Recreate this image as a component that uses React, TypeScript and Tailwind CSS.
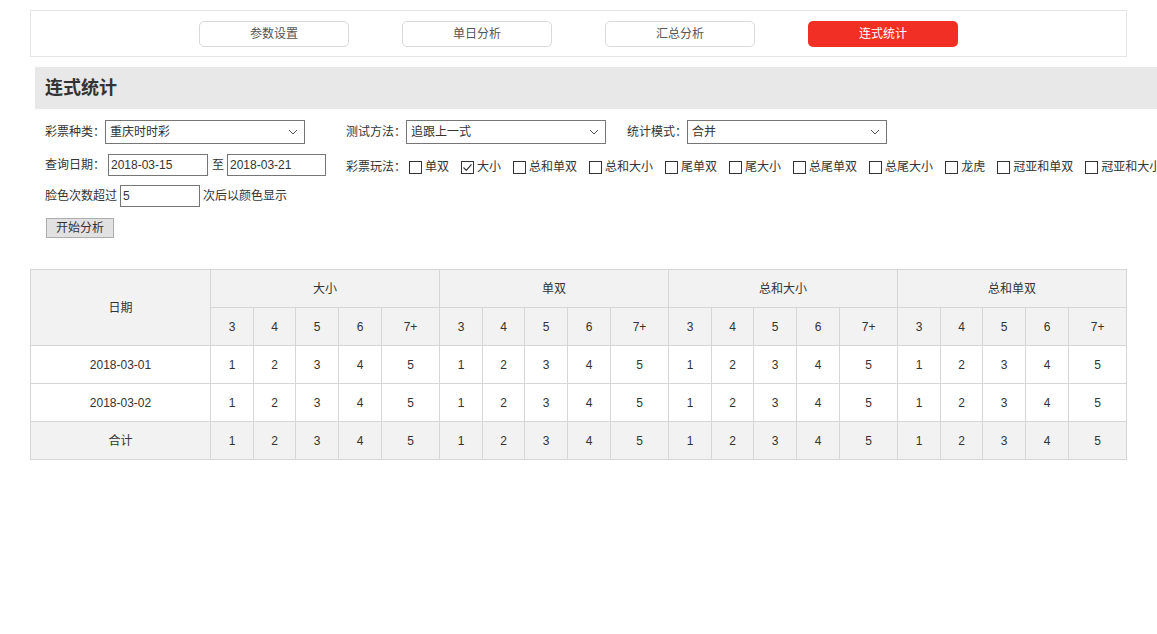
import React from 'react';

const tabs = ['参数设置', '单日分析', '汇总分析', '连式统计'];
const plays = ['单双', '大小', '总和单双', '总和大小', '尾单双', '尾大小', '总尾单双', '总尾大小', '龙虎', '冠亚和单双', '冠亚和大小'];
const groups = ['大小', '单双', '总和大小', '总和单双'];
const subs = ['3', '4', '5', '6', '7+'];
const widths = [43, 42, 43, 43, 58];
const rows = [
  { date: '2018-03-01', total: false },
  { date: '2018-03-02', total: false },
  { date: '合计', total: true },
];

function Chevron() {
  return (
    <svg width="10" height="6" viewBox="0 0 10 6" className="shrink-0">
      <path d="M1 1 L5 5 L9 1" fill="none" stroke="#555" strokeWidth="1" />
    </svg>
  );
}

function Select({ value, width }: { value: string; width: number }) {
  return (
    <div
      className="h-[24px] border border-[#767676] flex items-center justify-between pl-[4px] pr-[6px] bg-white"
      style={{ width }}
    >
      <span>{value}</span>
      <Chevron />
    </div>
  );
}

function Input({ value, width }: { value: string; width: number }) {
  return (
    <div className="h-[22px] border border-[#767676] flex items-center px-[2px] bg-white" style={{ width }}>
      {value}
    </div>
  );
}

function Check({ label, checked }: { label: string; checked?: boolean }) {
  return (
    <div className="flex items-center shrink-0 mr-[9px]">
      <span className="w-[13px] h-[13px] border border-[#333] ml-[3px] mr-[3px] flex items-center justify-center bg-white">
        {checked && (
          <svg width="11" height="11" viewBox="0 0 11 11">
            <path d="M1.5 5.5 L4.3 8.3 L9.5 2.3" fill="none" stroke="#333" strokeWidth="1.2" />
          </svg>
        )}
      </span>
      <span className="whitespace-nowrap">{label}</span>
    </div>
  );
}

export default function App() {
  const cell = 'border border-[#d6d6d6] text-center h-[38px] p-0 font-normal';
  return (
    <div
      className="w-[1157px] h-[634px] overflow-hidden bg-white text-[12px] text-[#333]"
      style={{ fontFamily: '"Liberation Sans", "Noto Sans CJK SC", sans-serif' }}
    >
      <div className="mt-[10px] ml-[30px] w-[1097px] h-[47px] border border-[#e5e5e5] flex items-center justify-center gap-[53px]">
        {tabs.map((t, i) =>
          i === 3 ? (
            <div key={t} className="w-[150px] h-[26px] rounded-[5px] bg-[#f22f25] text-white flex items-center justify-center">
              {t}
            </div>
          ) : (
            <div key={t} className="w-[150px] h-[26px] rounded-[5px] border border-[#d9d9d9] text-[#555] flex items-center justify-center">
              {t}
            </div>
          )
        )}
      </div>

      <div className="mt-[10px] ml-[35px] w-[1122px] h-[42px] bg-[#e8e8e8] flex items-center pl-[10px]">
        <span className="text-[18px] font-bold text-[#333]">连式统计</span>
      </div>

      <div className="flex pl-[45px] mt-[11px] whitespace-nowrap">
        <div className="w-[281px] shrink-0">
          <div className="flex items-center h-[24px]">
            <span className="w-[60px]">彩票种类：</span>
            <Select value="重庆时时彩" width={200} />
          </div>
          <div className="flex items-center h-[22px] mt-[10px]">
            <span className="w-[60px]">查询日期：</span>
            <span className="ml-[3px]"><Input value="2018-03-15" width={100} /></span>
            <span className="ml-[4px] mr-[3px]">至</span>
            <Input value="2018-03-21" width={100} />
          </div>
          <div className="flex items-center h-[22px] mt-[9px]">
            <span>脸色次数超过</span>
            <span className="ml-[3px] mr-[3px]"><Input value="5" width={80} /></span>
            <span>次后以颜色显示</span>
          </div>
          <button className="mt-[11px] ml-[1px] w-[68px] h-[20px] bg-[#e1e1e1] border border-[#adadad] text-[12px] text-[#333] flex items-center justify-center">
            开始分析
          </button>
        </div>

        <div className="ml-[20px]">
          <div className="flex items-center h-[24px]">
            <span className="w-[60px]">测试方法：</span>
            <Select value="追跟上一式" width={200} />
            <span className="ml-[21px] w-[60px]">统计模式：</span>
            <Select value="合并" width={200} />
          </div>
          <div className="flex items-center h-[22px] mt-[12px]">
            <span className="w-[60px] shrink-0">彩票玩法：</span>
            {plays.map((p) => (
              <Check key={p} label={p} checked={p === '大小'} />
            ))}
          </div>
        </div>
      </div>

      <table className="mt-[31px] ml-[30px] border-collapse table-fixed w-[1097px]">
        <colgroup>
          <col style={{ width: 180 }} />
          {groups.map((g) =>
            widths.map((w, i) => <col key={g + i} style={{ width: w }} />)
          )}
        </colgroup>
        <thead>
          <tr className="bg-[#f2f2f2]">
            <th rowSpan={2} className={cell}>日期</th>
            {groups.map((g) => (
              <th key={g} colSpan={5} className={cell}>{g}</th>
            ))}
          </tr>
          <tr className="bg-[#f2f2f2]">
            {groups.map((g) =>
              subs.map((s) => (
                <th key={g + s} className={cell}>{s}</th>
              ))
            )}
          </tr>
        </thead>
        <tbody>
          {rows.map((r) => (
            <tr key={r.date} className={r.total ? 'bg-[#f2f2f2]' : 'bg-white'}>
              <td className={cell}>{r.date}</td>
              {groups.map((g) =>
                [1, 2, 3, 4, 5].map((n) => (
                  <td key={g + n} className={cell}>{n}</td>
                ))
              )}
            </tr>
          ))}
        </tbody>
      </table>
    </div>
  );
}
